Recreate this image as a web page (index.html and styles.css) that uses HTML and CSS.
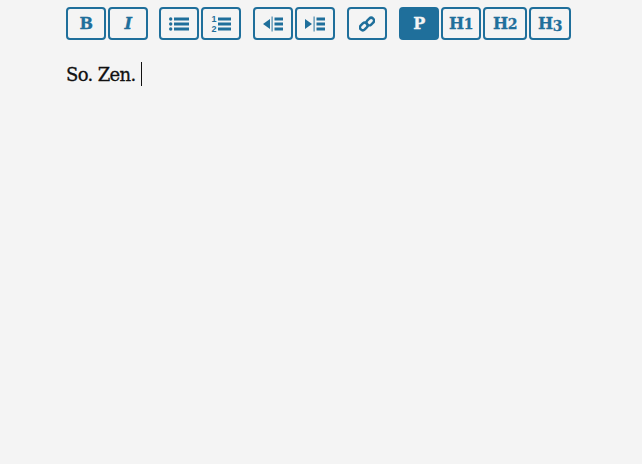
FILE: index.html
```html
<!DOCTYPE html>
<html lang="en">
<head>
    <meta charset="UTF-8">
    <title>Editor</title>
    <link rel="stylesheet" href="styles.css">
</head>
<body>
    <div class="editor">
        <div class="toolbar">
            <div class="group group-first">
                <button class="btn">B</button>
                <button class="btn btn-italic">I</button>
            </div>
            <div class="group">
                <button class="btn" aria-label="Bullet list">
                    <svg width="20" height="16" viewBox="0 0 20 16">
                        <circle cx="1.7" cy="3" r="1.7"/>
                        <circle cx="1.7" cy="8" r="1.7"/>
                        <circle cx="1.7" cy="13" r="1.7"/>
                        <rect x="5" y="1.5" width="15" height="3"/>
                        <rect x="5" y="6.5" width="15" height="3"/>
                        <rect x="5" y="11.5" width="15" height="3"/>
                    </svg>
                </button>
                <button class="btn" aria-label="Numbered list">
                    <span class="list-num"><span>1</span><span>2</span></span>
                    <svg width="13" height="16" viewBox="0 0 13 16">
                        <rect x="0" y="1.5" width="13" height="3"/>
                        <rect x="0" y="6.5" width="13" height="3"/>
                        <rect x="0" y="11.5" width="13" height="3"/>
                    </svg>
                </button>
            </div>
            <div class="group">
                <button class="btn" aria-label="Outdent">
                    <svg width="20" height="16" viewBox="0 0 20 16">
                        <path d="M0 8 L7 3 V13 Z"/>
                        <rect x="8.5" y="0.5" width="1.2" height="15" opacity="0.8"/>
                        <rect x="11.5" y="1.5" width="8.5" height="3"/>
                        <rect x="11.5" y="6.5" width="8.5" height="3"/>
                        <rect x="11.5" y="11.5" width="8.5" height="3"/>
                    </svg>
                </button>
                <button class="btn" aria-label="Indent">
                    <svg width="20" height="16" viewBox="0 0 20 16">
                        <path d="M7 8 L0 3 V13 Z"/>
                        <rect x="8.5" y="0.5" width="1.2" height="15" opacity="0.8"/>
                        <rect x="11.5" y="1.5" width="8.5" height="3"/>
                        <rect x="11.5" y="6.5" width="8.5" height="3"/>
                        <rect x="11.5" y="11.5" width="8.5" height="3"/>
                    </svg>
                </button>
            </div>
            <div class="group">
                <button class="btn" aria-label="Link">
                    <svg class="icon-link" width="16" height="16" viewBox="0 0 16 16">
                        <rect x="0.6" y="7.6" width="8.4" height="5.6" rx="2.8" transform="rotate(-45 4.8 10.4)"/>
                        <rect x="7" y="2.8" width="8.4" height="5.6" rx="2.8" transform="rotate(-45 11.2 5.6)"/>
                    </svg>
                </button>
            </div>
            <div class="group">
                <button class="btn active">P</button>
                <button class="btn">H<span class="digit">1</span></button>
                <button class="btn btn-h2">H<span class="digit">2</span></button>
                <button class="btn btn-h3">H<span class="digit low">3</span></button>
            </div>
        </div>
        <div class="content">
            <span class="text">So. Zen.</span><span class="cursor"></span>
        </div>
    </div>
</body>
</html>
```

FILE: styles.css
```css
* {
    box-sizing: border-box;
    margin: 0;
    padding: 0;
}

body {
    background-color: #f4f4f4;
    font-family: 'DejaVu Serif', 'Liberation Serif', serif;
}

.editor {
    padding: 7px 66px 0;
}

.toolbar {
    display: flex;
    gap: 12px;
}

.group {
    display: flex;
    gap: 2px;
}

.group-first {
    margin-right: -1px;
}

.btn {
    display: flex;
    align-items: center;
    justify-content: center;
    width: 40px;
    height: 33px;
    background-color: transparent;
    color: #1f6f9b;
    border: 2px solid #1f6f9b;
    border-radius: 4px;
    font-family: 'DejaVu Serif', serif;
    font-size: 16px;
    font-weight: bold;
    letter-spacing: -0.5px;
    -webkit-text-stroke: 0.3px #1f6f9b;
    cursor: pointer;
}

.btn svg {
    fill: #1f6f9b;
}

.btn-italic {
    font-style: italic;
}

.btn-h2 {
    width: 44px;
}

.btn-h3 {
    width: 42px;
}

.active {
    background-color: #1f6f9b;
    color: #f4f4f4;
    -webkit-text-stroke: 0.3px #f4f4f4;
}

.digit {
    font-size: 14px;
}

.low {
    position: relative;
    top: 2px;
}

.list-num {
    display: flex;
    flex-direction: column;
    margin-right: 1px;
    font-family: 'Liberation Sans', sans-serif;
    font-size: 9px;
    line-height: 10px;
    letter-spacing: 0;
    -webkit-text-stroke: 0;
}

.icon-link rect {
    fill: none;
    stroke: #1f6f9b;
    stroke-width: 2.4;
}

.content {
    display: flex;
    align-items: center;
    height: 24px;
    margin-top: 22px;
}

.text {
    font-size: 18px;
    letter-spacing: -0.65px;
    color: #111;
    -webkit-text-stroke: 0.3px #111;
}

.cursor {
    width: 1px;
    height: 24px;
    margin-left: 5px;
    background-color: #111;
}
```
